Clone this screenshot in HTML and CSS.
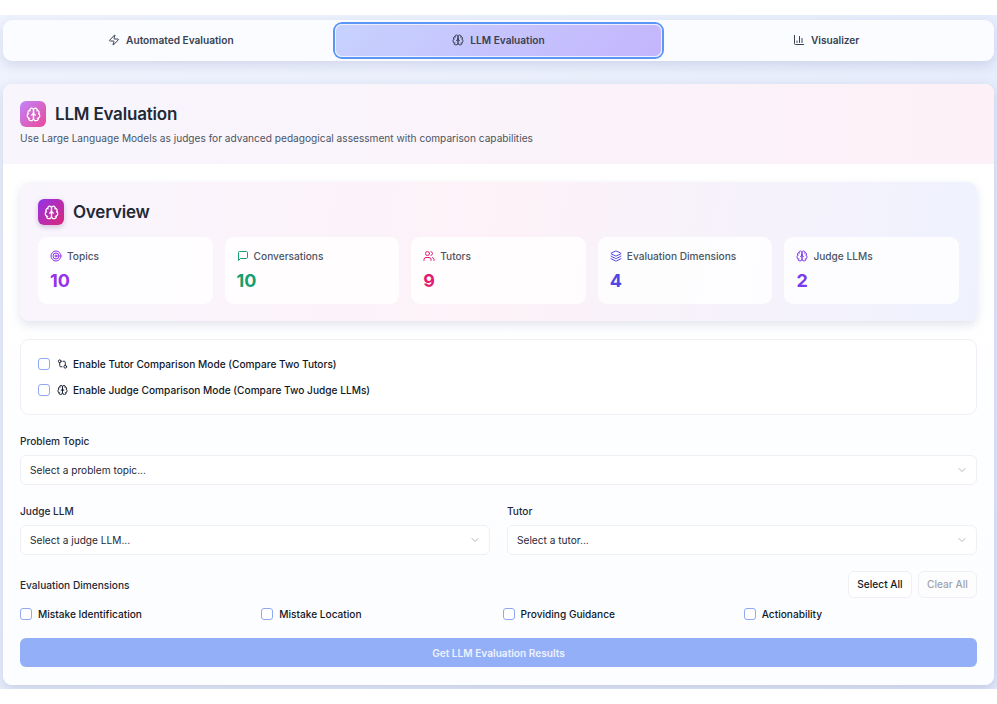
FILE: index.html
```html
<!DOCTYPE html>
<html lang="en">
<head>
<meta charset="utf-8">
<title>LLM Evaluation</title>
<link rel="stylesheet" href="styles.css">
</head>
<body>
<svg class="defs" aria-hidden="true">
  <symbol id="i-brain" viewBox="0 0 24 24"><path d="M12 5a3 3 0 1 0-5.997.125 4 4 0 0 0-2.526 5.77 4 4 0 0 0 .556 6.588A4 4 0 1 0 12 18Z"/><path d="M12 5a3 3 0 1 1 5.997.125 4 4 0 0 1 2.526 5.77 4 4 0 0 1-.556 6.588A4 4 0 1 1 12 18Z"/><path d="M15 13a4.5 4.5 0 0 1-3-4 4.5 4.5 0 0 1-3 4"/><path d="M17.599 6.5a3 3 0 0 0 .399-1.375"/><path d="M6.003 5.125A3 3 0 0 0 6.401 6.5"/><path d="M3.477 10.896a4 4 0 0 1 .585-.396"/><path d="M19.938 10.5a4 4 0 0 1 .585.396"/><path d="M6 18a4 4 0 0 1-1.967-.516"/><path d="M19.967 17.484A4 4 0 0 1 18 18"/></symbol>
  <symbol id="i-zap" viewBox="0 0 24 24"><path d="M4 14a1 1 0 0 1-.78-1.63l9.9-10.2a.5.5 0 0 1 .86.46l-1.92 6.02A1 1 0 0 0 13 10h7a1 1 0 0 1 .78 1.63l-9.9 10.2a.5.5 0 0 1-.86-.46l1.92-6.02A1 1 0 0 0 11 14z"/></symbol>
  <symbol id="i-chart" viewBox="0 0 24 24"><path d="M3 3v16a2 2 0 0 0 2 2h16"/><path d="M18 17V9"/><path d="M13 17V5"/><path d="M8 17v-3"/></symbol>
  <symbol id="i-target" viewBox="0 0 24 24"><circle cx="12" cy="12" r="10"/><circle cx="12" cy="12" r="6"/><circle cx="12" cy="12" r="2"/></symbol>
  <symbol id="i-msg" viewBox="0 0 24 24"><path d="M21 15a2 2 0 0 1-2 2H7l-4 4V5a2 2 0 0 1 2-2h14a2 2 0 0 1 2 2z"/></symbol>
  <symbol id="i-users" viewBox="0 0 24 24"><path d="M16 21v-2a4 4 0 0 0-4-4H6a4 4 0 0 0-4 4v2"/><circle cx="9" cy="7" r="4"/><path d="M22 21v-2a4 4 0 0 0-3-3.87"/><path d="M16 3.13a4 4 0 0 1 0 7.75"/></symbol>
  <symbol id="i-layers" viewBox="0 0 24 24"><path d="M12.83 2.18a2 2 0 0 0-1.66 0L2.6 6.08a1 1 0 0 0 0 1.83l8.58 3.91a2 2 0 0 0 1.66 0l8.58-3.9a1 1 0 0 0 0-1.83z"/><path d="M2 12a1 1 0 0 0 .58.91l8.6 3.91a2 2 0 0 0 1.65 0l8.58-3.9A1 1 0 0 0 22 12"/><path d="M2 17a1 1 0 0 0 .58.91l8.6 3.91a2 2 0 0 0 1.65 0l8.58-3.9A1 1 0 0 0 22 17"/></symbol>
  <symbol id="i-compare" viewBox="0 0 24 24"><circle cx="18" cy="18" r="3"/><circle cx="6" cy="6" r="3"/><path d="M13 6h3a2 2 0 0 1 2 2v7"/><path d="M11 18H8a2 2 0 0 1-2-2V9"/></symbol>
  <symbol id="i-chev" viewBox="0 0 24 24"><path d="m6 9 6 6 6-6"/></symbol>
</svg>
<div class="app">
  <nav class="tabs">
    <button class="tab"><svg class="ico"><use href="#i-zap"/></svg>Automated Evaluation</button>
    <button class="tab active"><svg class="ico"><use href="#i-brain"/></svg>LLM Evaluation</button>
    <button class="tab"><svg class="ico"><use href="#i-chart"/></svg>Visualizer</button>
  </nav>
  <main class="card">
    <header class="card-head">
      <div class="title-row">
        <span class="badge badge-light"><svg class="ico-lg"><use href="#i-brain"/></svg></span>
        <h1>LLM Evaluation</h1>
      </div>
      <p class="sub">Use Large Language Models as judges for advanced pedagogical assessment with comparison capabilities</p>
    </header>
    <div class="card-body">
      <section class="overview">
        <div class="title-row">
          <span class="badge badge-dark"><svg class="ico-lg"><use href="#i-brain"/></svg></span>
          <h2>Overview</h2>
        </div>
        <div class="stats">
          <div class="stat"><div class="stat-label"><svg class="ico c-purple"><use href="#i-target"/></svg>Topics</div><div class="stat-val v-purple">10</div></div>
          <div class="stat"><div class="stat-label"><svg class="ico c-green"><use href="#i-msg"/></svg>Conversations</div><div class="stat-val v-green">10</div></div>
          <div class="stat"><div class="stat-label"><svg class="ico c-pink"><use href="#i-users"/></svg>Tutors</div><div class="stat-val v-pink">9</div></div>
          <div class="stat"><div class="stat-label"><svg class="ico c-indigo"><use href="#i-layers"/></svg>Evaluation Dimensions</div><div class="stat-val v-indigo">4</div></div>
          <div class="stat"><div class="stat-label"><svg class="ico c-violet"><use href="#i-brain"/></svg>Judge LLMs</div><div class="stat-val v-violet">2</div></div>
        </div>
      </section>
      <section class="modes">
        <label class="check"><span class="box"></span><svg class="ico tight"><use href="#i-compare"/></svg>Enable Tutor Comparison Mode (Compare Two Tutors)</label>
        <label class="check"><span class="box"></span><svg class="ico tight"><use href="#i-brain"/></svg>Enable Judge Comparison Mode (Compare Two Judge LLMs)</label>
      </section>
      <div class="field topic">
        <div class="label">Problem Topic</div>
        <div class="select">Select a problem topic...<svg class="chev"><use href="#i-chev"/></svg></div>
      </div>
      <div class="two">
        <div class="field">
          <div class="label">Judge LLM</div>
          <div class="select">Select a judge LLM...<svg class="chev"><use href="#i-chev"/></svg></div>
        </div>
        <div class="field">
          <div class="label">Tutor</div>
          <div class="select">Select a tutor...<svg class="chev"><use href="#i-chev"/></svg></div>
        </div>
      </div>
      <div class="dim-head">
        <div class="label flush">Evaluation Dimensions</div>
        <div class="dim-btns">
          <button class="mini">Select All</button>
          <button class="mini off">Clear All</button>
        </div>
      </div>
      <div class="dims">
        <label class="check dim"><span class="box"></span>Mistake Identification</label>
        <label class="check dim"><span class="box"></span>Mistake Location</label>
        <label class="check dim"><span class="box"></span>Providing Guidance</label>
        <label class="check dim"><span class="box"></span>Actionability</label>
      </div>
      <button class="submit">Get LLM Evaluation Results</button>
    </div>
  </main>
</div>
</body>
</html>
```
FILE: styles.css
```css
* { box-sizing: border-box; }
html, body { margin: 0; padding: 0; background: #fff; }
body { font-family: Inter, "Liberation Sans", sans-serif; color: #111827; height: 704px; overflow: hidden; }
.defs { display: none; }
svg { fill: none; stroke: currentColor; stroke-width: 2; stroke-linecap: round; stroke-linejoin: round; flex: none; }
.ico { width: 12px; height: 12px; }
.ico-lg { width: 15px; height: 15px; }
button { font-family: inherit; border: 0; }

.app { margin-top: 15px; height: 674px; padding: 5px 3px 4px; background: linear-gradient(135deg, #eff3fd, #e2e9fa); overflow: hidden; }

.tabs { display: grid; grid-template-columns: repeat(3, 1fr); height: 41px; padding: 4px; background: #fbfcff; border-radius: 9px; box-shadow: 0 4px 12px rgba(60, 80, 140, .16); }
.tab { display: flex; align-items: center; justify-content: center; gap: 6px; padding: 0 0 2px; background: transparent; font-size: 10.15px; font-weight: 600; color: #374151; border-radius: 7px; }
.tab.active { background: linear-gradient(135deg, #c7d2fe, #c4b5fd); box-shadow: inset 0 0 0 1px #eef0ff, 0 0 0 2px #5b96f6; }

.card { margin-top: 23px; height: 601px; background: #fff; border-radius: 9px; overflow: hidden; box-shadow: 0 4px 12px rgba(60, 80, 140, .2); }
.card-head { height: 80px; padding: 17px 17px 0; background: linear-gradient(90deg, #f8f5fd, #fdf1f7); }
.title-row { display: flex; align-items: center; gap: 9px; }
.badge { display: flex; align-items: center; justify-content: center; width: 26px; height: 26px; border-radius: 6px; color: #fff; }
.badge-light { background: linear-gradient(135deg, #c084fc, #ec4899); }
.badge-dark { background: linear-gradient(135deg, #9333ea, #db2777); box-shadow: 0 2px 5px rgba(80, 40, 120, .25); }
h1, h2 { margin: 0; font-size: 17px; font-weight: 600; color: #1f2937; letter-spacing: -.2px; line-height: 26px; }
.sub { margin: 4px 0 0; font-size: 10.15px; line-height: 15px; color: #4b5563; }

.card-body { padding: 18px 17px 0; background: linear-gradient(180deg, #fff, #fcfdff); height: 521px; }
.overview { height: 139px; padding: 17px 18px; border-radius: 9px; background: linear-gradient(100deg, #f9f5fd, #fdf2f8 50%, #eff2fe); box-shadow: 0 4px 10px rgba(60, 70, 120, .14); }
.stats { display: grid; grid-template-columns: repeat(5, 1fr); gap: 12px; margin-top: 12px; }
.stat { height: 67px; padding: 12px; border-radius: 9px; background: rgba(255, 255, 255, .82); }
.stat-label { display: flex; align-items: center; gap: 5px; font-size: 10.15px; font-weight: 500; line-height: 14px; color: #4b5563; }
.stat-val { margin-top: 6px; font-size: 18px; font-weight: 700; line-height: 24px; }
.c-purple, .v-purple { color: #9333ea; }
.c-green, .v-green { color: #16a070; }
.c-pink, .v-pink { color: #e11d72; }
.c-indigo, .v-indigo { color: #4f46e5; }
.c-violet, .v-violet { color: #7c3aed; }

.modes { display: flex; flex-direction: column; gap: 14px; height: 76px; margin-top: 18px; padding: 18px 17px; border: 1px solid #eef0f6; border-radius: 9px; background: #fff; }
.check { display: flex; align-items: center; gap: 7px; height: 12px; font-size: 10.15px; font-weight: 500; color: #111827; }
.tight { margin-right: -2px; width: 11px; }
.box { flex: none; width: 12px; height: 12px; border: 1px solid #8fa8f5; border-radius: 3px; background: #fff; }

.field { display: flex; flex-direction: column; }
.topic { margin-top: 19px; }
.label { font-size: 10.15px; font-weight: 500; line-height: 14px; color: #1f2937; margin-bottom: 7px; }
.label.flush { margin: 2px 0 0; }
.select { display: flex; align-items: center; justify-content: space-between; height: 30px; padding: 0 8px 0 9px; border: 1px solid #eef0f6; border-radius: 6px; background: #fff; font-size: 10.15px; color: #1f2937; }
.chev { width: 12px; height: 12px; color: #9ca3af; stroke-width: 1.6; }
.two { display: grid; grid-template-columns: 1fr 1fr; gap: 17px; margin-top: 18.5px; }

.dim-head { display: flex; align-items: center; justify-content: space-between; margin-top: 16px; }
.dim-btns { display: flex; gap: 6px; }
.mini { height: 27px; padding: 0 8.25px; border: 1px solid #eef0f6; border-radius: 6px; background: #fff; font-size: 10.15px; font-weight: 500; color: #111827; }
.mini.off { color: #9ca3af; background: #fdfdfe; }
.dims { display: grid; grid-template-columns: repeat(4, 1fr); gap: 8px; margin-top: 10px; }
.dim { gap: 6px; }
.submit { display: block; width: 100%; height: 29px; margin-top: 18.5px; border-radius: 6px; background: #93aff7; color: #eef2ff; font-size: 10.15px; font-weight: 600; }
```
